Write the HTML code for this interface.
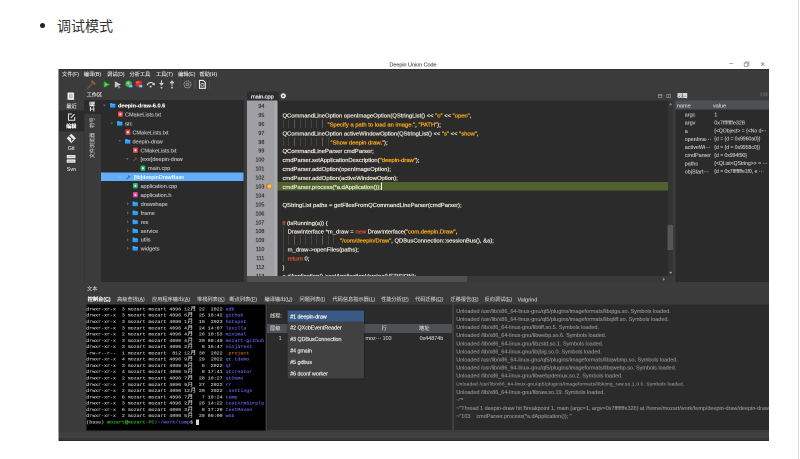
<!DOCTYPE html>
<html lang="zh-CN"><head><meta charset="utf-8"><title>调试模式</title>
<style>
*{box-sizing:border-box;margin:0;padding:0}
html,body{width:800px;height:459px;overflow:hidden;background:#fff}
body{position:relative;font-family:"Liberation Sans","Noto Sans CJK SC",sans-serif;color:#333}
.a{position:absolute;white-space:pre}
.b{font-weight:bold}
.m{font-family:"Liberation Mono","Noto Sans CJK SC",monospace}
svg{position:absolute;overflow:visible}
.or{color:#f2a41c;-webkit-text-stroke:.6px #f2a41c}.kw{color:#e2562a}
.code{-webkit-text-stroke:.44px currentColor}
.ui{-webkit-text-stroke:.24px currentColor}
.term{-webkit-text-stroke:.24px currentColor}
.g{color:#3a3a3a;opacity:.0}
.bl{color:#6666f2}.gr{color:#31c431}.rd{color:#cf6a3a}
.yue{display:inline-block;width:11.86px;font-size:11px;line-height:1;vertical-align:baseline;text-align:right;color:#e6e6e6}.cur{background:#d8d8d8}
#w{position:absolute;left:0;top:0;width:1600px;height:918px;transform:scale(0.5);transform-origin:0 0;will-change:transform;-webkit-text-stroke-width:0.24px;filter:blur(0.6px)}
</style></head><body>
<div class="a" style="left:798px;top:0px;width:1.3px;height:459px;background:#d6d9df;"></div>
<div class="a" style="left:39.8px;top:23px;width:5px;height:5px;border-radius:50%;background:#222"></div>
<div class="a" style="left:57px;top:15.6px;font-size:14px;line-height:20px;color:#333">调试模式</div>
<div id="w">
<div class="a" style="left:116.6px;top:116px;width:1421px;height:22px;background:#ffffff;"></div>
<div class="a" style="left:116.6px;top:137.6px;width:1421px;height:744.4px;background:#3b3b3b;"></div>
<div class="a" style="left:116.6px;top:137.6px;width:1421px;height:1.4px;background:#2a2a2a;"></div>
<div class="a" style="left:116.6px;top:137.6px;width:1.4px;height:744.4px;background:#2c2c2c;"></div>
<div class="a" style="left:116px;top:118px;width:1420px;text-align:center;font-size:10.8px;line-height:22px;color:#4a4a4a">Deepin Union Code</div>
<svg style="left:1450px;top:116px" width="88" height="22" viewBox="0 0 44 11"><g fill="none" stroke="#7a7a7a" stroke-width=".65"><path d="M4.5 5.6h3.6"/><rect x="19.2" y="5" width="3.6" height="3.4"/><path d="M20.4 5V3.9h3.6v3.4h-1.2"/><path d="M36 4.5l3.4 3.4M39.4 4.5l-3.4 3.4"/></g></svg>
<div class="a ui" style="left:124px;top:141.52px;font-size:10.4px;line-height:14.56px;color:#e4e4e4;">文件(F)</div>
<div class="a ui" style="left:167.6px;top:141.52px;font-size:10.4px;line-height:14.56px;color:#e4e4e4;">编译(B)</div>
<div class="a ui" style="left:214px;top:141.52px;font-size:10.4px;line-height:14.56px;color:#e4e4e4;">调试(D)</div>
<div class="a ui" style="left:259px;top:141.52px;font-size:10.4px;line-height:14.56px;color:#e4e4e4;">分析工具</div>
<div class="a ui" style="left:312px;top:141.52px;font-size:10.4px;line-height:14.56px;color:#e4e4e4;">工具(T)</div>
<div class="a ui" style="left:356px;top:141.52px;font-size:10.4px;line-height:14.56px;color:#e4e4e4;">编辑(E)</div>
<div class="a ui" style="left:399px;top:141.52px;font-size:10.4px;line-height:14.56px;color:#e4e4e4;">帮助(H)</div>
<div class="a" style="left:116.6px;top:865px;width:1421px;height:10.6px;background:#404040;"></div>
<div class="a" style="left:116.6px;top:875.6px;width:1421px;height:5px;background:#363636;"></div>
<div class="a" style="left:116.6px;top:880.4px;width:1421px;height:1.6px;background:#2b2b2b;"></div>
<svg style="left:172px;top:159px" width="20" height="20" viewBox="0 0 10 10"><path d="M1.7 8.9L7.2 3" stroke="#7d4f38" stroke-width="1.5" stroke-linecap="round"/><path d="M6 1.7l2.6 2.6" stroke="#8e5f46" stroke-width="2" stroke-linecap="round"/></svg>
<svg style="left:206px;top:160px" width="16" height="18" viewBox="0 0 8 9"><path d="M.8 1.2v6.6L7 4.5z" fill="#27c127"/><path d="M2.2 3.4v2.4L4.6 4.5z" fill="#7be36f"/></svg>
<svg style="left:228px;top:160px" width="16" height="18" viewBox="0 0 8 9"><path d="M.8 1.2v6.6L7 4.5z" fill="#c9c9c9"/><path d="M3.6 4.2l3.2 3.6-1.6.1-.9 1.2z" fill="#8d8d8d"/></svg>
<svg style="left:250px;top:160px" width="16" height="18" viewBox="0 0 8 9"><circle cx="3.6" cy="3.8" r="3.3" fill="#3db54a"/><circle cx="3.2" cy="3.2" r="1.3" fill="#8fe08a"/><rect x="3.8" y="5" width="3.8" height="2.6" rx=".6" fill="#3f8fe0"/><rect x="4.4" y="5.5" width="2.6" height="1" fill="#cfe5fa"/></svg>
<svg style="left:270px;top:160px" width="16" height="18" viewBox="0 0 8 9"><rect x=".6" y=".9" width="6.2" height="5.6" rx="1.2" fill="#e22a2a"/><path d="M1.2 2.2h3" stroke="#ff8a8a" stroke-width=".9"/><rect x="3.8" y="5" width="3.8" height="2.6" rx=".6" fill="#3f8fe0"/><rect x="4.4" y="5.5" width="2.6" height="1" fill="#cfe5fa"/></svg>
<svg style="left:292px;top:160px" width="20" height="18" viewBox="0 0 10 9"><path d="M1.2 5.4A3.6 3.6 0 0 1 8 4.6" fill="none" stroke="#dcdcdc" stroke-width="1.1"/><path d="M8.9 2.6l-.4 3-2.6-1z" fill="#dcdcdc"/><circle cx="4.6" cy="6.6" r=".95" fill="#dcdcdc"/></svg>
<svg style="left:316px;top:159px" width="14" height="20" viewBox="0 0 7 10"><path d="M3.5 .6v5.2" stroke="#d2d2d2" stroke-width=".9"/><path d="M1 3.4h5L3.5 6.4z" fill="#d2d2d2"/><circle cx="3.5" cy="8.2" r=".9" fill="#d2d2d2"/></svg>
<svg style="left:337px;top:159px" width="14" height="20" viewBox="0 0 7 10"><path d="M3.5 2v4.6" stroke="#d2d2d2" stroke-width=".9"/><path d="M1 3.8h5L3.5 .8z" fill="#d2d2d2"/><circle cx="3.5" cy="8.2" r=".9" fill="#d2d2d2"/></svg>
<div class="a" style="left:360.6px;top:160px;width:1.2px;height:18px;background:#4d4d4d;"></div>
<svg style="left:366px;top:160px" width="18" height="18" viewBox="0 0 9 9"><circle cx="4.5" cy="4.4" r="3.5" fill="none" stroke="#b4b4b4" stroke-width=".8" stroke-dasharray="1.6 .5"/><circle cx="4.5" cy="4.4" r="1.3" fill="none" stroke="#a0a0a0" stroke-width=".7"/></svg>
<div class="a" style="left:389.2px;top:160px;width:1.4px;height:18px;background:#5a5a5a;"></div>
<svg style="left:397px;top:159px" width="16" height="20" viewBox="0 0 8 10"><path d="M1 .9h3.8l2 2v5.9H1z" fill="none" stroke="#ececec" stroke-width="1.15"/><circle cx="3.9" cy="5.4" r="1.5" fill="none" stroke="#d0d0d0" stroke-width=".7"/></svg>
<div class="a" style="left:418.6px;top:160px;width:1.4px;height:18px;background:#5a5a5a;"></div>
<div class="a" style="left:117.6px;top:221.2px;width:50.4px;height:41.8px;background:#2a2a2a;"></div>
<svg style="left:135.4px;top:185px" width="13.2" height="14.8" viewBox="0 0 6.6 7.4"><rect x="0" y="0" width="6.6" height="7.4" rx=".8" fill="#ececec"/><rect x="1.7" y="1.9" width="3.2" height="3.6" fill="#9a9a9a"/><rect x="2.3" y="2.5" width="2" height="2.4" fill="#d4d4d4"/></svg>
<div class="a" style="left:132.6px;top:205.92px;font-size:10.4px;line-height:14.56px;color:#e2e2e2;">最近</div>
<svg style="left:134.6px;top:226px" width="16.8" height="16" viewBox="0 0 8.4 8"><path d="M4.4 1H1v6.2h6.2V4" fill="none" stroke="#e4e4e4" stroke-width="1"/><path d="M3.4 4.9L7 1.1" stroke="#e4e4e4" stroke-width="1.1"/></svg>
<div class="a b" style="left:132.2px;top:246.32px;font-size:10.4px;line-height:14.56px;color:#ffffff;">编辑</div>
<svg style="left:132.8px;top:267px" width="20" height="20" viewBox="0 0 10 10"><path d="M4.8 .2L9.4 4.8 4.8 9.6.2 4.8z" fill="#e8e8e8"/><path d="M3.4 3.2L6 5.8M5 4.8V7" stroke="#3b3b3b" stroke-width=".8"/><circle cx="3.4" cy="3.2" r=".7" fill="#3b3b3b"/><circle cx="6.2" cy="6" r=".7" fill="#3b3b3b"/><circle cx="5" cy="7.2" r=".6" fill="#3b3b3b"/></svg>
<div class="a" style="left:135.4px;top:289.44px;font-size:10.8px;line-height:15.12px;color:#dcdcdc;">Git</div>
<svg style="left:133.2px;top:310px" width="18.8" height="16" viewBox="0 0 9.4 8"><rect x=".2" y="0" width="8.8" height="3.2" rx=".5" fill="#ececec"/><rect x=".2" y="4.4" width="8.8" height="3.4" rx=".5" fill="#ececec"/><path d="M1.2 1.6h6.8M1.2 6.1h6.8" stroke="#9a9a9a" stroke-width=".6"/></svg>
<div class="a" style="left:133.6px;top:331.44px;font-size:10.8px;line-height:15.12px;color:#dcdcdc;">Svn</div>
<div class="a ui" style="left:173.2px;top:182.52px;font-size:10.4px;line-height:14.56px;color:#ececec;">工作区</div>
<div class="a" style="left:168px;top:200px;width:1.8px;height:364px;background:#353535;"></div>
<div class="a" style="left:168px;top:200px;width:34px;height:28px;background:#2b2b2b;"></div>
<div class="a b" style="left:184.6px;top:213.2px;font-size:10.2px;line-height:14px;color:#ffffff;transform:translate(-50%,-50%) rotate(-90deg)">工程</div>
<div class="a" style="left:184.6px;top:244.6px;font-size:10.2px;line-height:14px;color:#c0c0c0;transform:translate(-50%,-50%) rotate(-90deg)">符号</div>
<div class="a" style="left:184.6px;top:291.1px;font-size:10.2px;line-height:14px;color:#c0c0c0;transform:translate(-50%,-50%) rotate(-90deg)">文件浏览器</div>
<div class="a" style="left:202px;top:200px;width:286px;height:364px;background:#2b2b2b;"></div>
<div class="a" style="left:202px;top:345px;width:285.2px;height:17.2px;background:#62aefa;"></div>
<svg style="left:206.4px;top:208.9px" width="5.2" height="4" viewBox="0 0 2.6 2"><path d="M0 .1h2.6L1.3 1.9z" fill="#6e6e6e"/></svg>
<svg style="left:219.8px;top:206.3px" width="10.8" height="9.2" viewBox="0 0 5.4 4.6"><path d="M0 .5Q0 0 .5 0h1.6l.7.7h2.1q.5 0 .5.5v2.9q0 .5-.5.5H.5Q0 4.6 0 4.1z" fill="#2a9df4"/><path d="M.3 1.6h4.8" stroke="#6cc3ff" stroke-width=".5"/></svg>
<div class="a b" style="left:236px;top:204.06px;font-size:11.2px;line-height:15.68px;color:#ffffff;">deepin-draw-6.0.6</div>
<svg style="left:236px;top:223.38px" width="9.6" height="10.8" viewBox="0 0 4.8 5.4"><rect width="4.8" height="5.4" rx=".9" fill="#e5484d"/><rect x="1.4" y="1.8" width="2" height="2" rx=".4" fill="#ffe1e1"/></svg>
<div class="a" style="left:250px;top:222.08px;font-size:11px;line-height:15.4px;color:#c6c6c6;">CMakeLists.txt</div>
<svg style="left:221.4px;top:244.66px" width="5.2" height="4" viewBox="0 0 2.6 2"><path d="M0 .1h2.6L1.3 1.9z" fill="#6e6e6e"/></svg>
<svg style="left:233.8px;top:242.06px" width="10.8" height="9.2" viewBox="0 0 5.4 4.6"><path d="M0 .5Q0 0 .5 0h1.6l.7.7h2.1q.5 0 .5.5v2.9q0 .5-.5.5H.5Q0 4.6 0 4.1z" fill="#2a9df4"/><path d="M.3 1.6h4.8" stroke="#6cc3ff" stroke-width=".5"/></svg>
<div class="a" style="left:250px;top:239.96px;font-size:11px;line-height:15.4px;color:#c6c6c6;">src</div>
<svg style="left:251.2px;top:259.14px" width="9.6" height="10.8" viewBox="0 0 4.8 5.4"><rect width="4.8" height="5.4" rx=".9" fill="#e5484d"/><rect x="1.4" y="1.8" width="2" height="2" rx=".4" fill="#ffe1e1"/></svg>
<div class="a" style="left:265px;top:257.84px;font-size:11px;line-height:15.4px;color:#c6c6c6;">CMakeLists.txt</div>
<svg style="left:237.4px;top:280.42px" width="5.2" height="4" viewBox="0 0 2.6 2"><path d="M0 .1h2.6L1.3 1.9z" fill="#6e6e6e"/></svg>
<svg style="left:249.8px;top:277.82px" width="10.8" height="9.2" viewBox="0 0 5.4 4.6"><path d="M0 .5Q0 0 .5 0h1.6l.7.7h2.1q.5 0 .5.5v2.9q0 .5-.5.5H.5Q0 4.6 0 4.1z" fill="#2a9df4"/><path d="M.3 1.6h4.8" stroke="#6cc3ff" stroke-width=".5"/></svg>
<div class="a" style="left:265px;top:275.72px;font-size:11px;line-height:15.4px;color:#c6c6c6;">deepin-draw</div>
<svg style="left:266.4px;top:294.9px" width="9.6" height="10.8" viewBox="0 0 4.8 5.4"><rect width="4.8" height="5.4" rx=".9" fill="#e5484d"/><rect x="1.4" y="1.8" width="2" height="2" rx=".4" fill="#ffe1e1"/></svg>
<div class="a" style="left:281px;top:293.6px;font-size:11px;line-height:15.4px;color:#c6c6c6;">CMakeLists.txt</div>
<svg style="left:252.4px;top:316.18px" width="5.2" height="4" viewBox="0 0 2.6 2"><path d="M0 .1h2.6L1.3 1.9z" fill="#6e6e6e"/></svg>
<svg style="left:265.6px;top:313.78px" width="8.8" height="8.8" viewBox="0 0 4.4 4.4"><path d="M.8 3.8L3 1.4" stroke="#86513a" stroke-width=".9" stroke-linecap="round"/><path d="M2.6 .9l1.1 1.1" stroke="#86513a" stroke-width="1.1" stroke-linecap="round"/></svg>
<div class="a" style="left:281px;top:311.48px;font-size:11px;line-height:15.4px;color:#c6c6c6;">[exe]deepin-draw</div>
<svg style="left:281.2px;top:330.66px" width="9.6" height="10.8" viewBox="0 0 4.8 5.4"><rect width="4.8" height="5.4" rx=".9" fill="#29b473"/><rect x="1.4" y="1.8" width="2" height="2" rx=".4" fill="#d9ffe9"/></svg>
<div class="a" style="left:296px;top:329.36px;font-size:11px;line-height:15.4px;color:#c6c6c6;">main.cpp</div>
<svg style="left:239.2px;top:351.34px" width="4" height="5.2" viewBox="0 0 2 2.6"><path d="M.1 0v2.6L1.9 1.3z" fill="#8cc2f8"/></svg>
<svg style="left:251.6px;top:349.54px" width="8.8" height="8.8" viewBox="0 0 4.4 4.4"><path d="M.8 3.8L3 1.4" stroke="#2f66a6" stroke-width=".9" stroke-linecap="round"/><path d="M2.6 .9l1.1 1.1" stroke="#2f66a6" stroke-width="1.1" stroke-linecap="round"/></svg>
<div class="a" style="left:267.4px;top:347.24px;font-size:11px;line-height:15.4px;color:#ffffff;">[lib]deepinDrawBase</div>
<svg style="left:266px;top:366.42px" width="9.6" height="10.8" viewBox="0 0 4.8 5.4"><rect width="4.8" height="5.4" rx=".9" fill="#29b473"/><rect x="1.4" y="1.8" width="2" height="2" rx=".4" fill="#d9ffe9"/></svg>
<div class="a" style="left:281px;top:365.12px;font-size:11px;line-height:15.4px;color:#c6c6c6;">application.cpp</div>
<svg style="left:266px;top:384.3px" width="9.6" height="10.8" viewBox="0 0 4.8 5.4"><rect width="4.8" height="5.4" rx=".9" fill="#e0409e"/><rect x="1.4" y="1.8" width="2" height="2" rx=".4" fill="#ffd9f0"/></svg>
<div class="a" style="left:281px;top:383px;font-size:11px;line-height:15.4px;color:#c6c6c6;">application.h</div>
<svg style="left:253.8px;top:404.98px" width="4" height="5.2" viewBox="0 0 2 2.6"><path d="M.1 0v2.6L1.9 1.3z" fill="#6e6e6e"/></svg>
<svg style="left:264.6px;top:402.98px" width="10.8" height="9.2" viewBox="0 0 5.4 4.6"><path d="M0 .5Q0 0 .5 0h1.6l.7.7h2.1q.5 0 .5.5v2.9q0 .5-.5.5H.5Q0 4.6 0 4.1z" fill="#2a9df4"/><path d="M.3 1.6h4.8" stroke="#6cc3ff" stroke-width=".5"/></svg>
<div class="a" style="left:281.6px;top:400.88px;font-size:11px;line-height:15.4px;color:#c6c6c6;">drawshape</div>
<svg style="left:253.8px;top:422.86px" width="4" height="5.2" viewBox="0 0 2 2.6"><path d="M.1 0v2.6L1.9 1.3z" fill="#6e6e6e"/></svg>
<svg style="left:264.6px;top:420.86px" width="10.8" height="9.2" viewBox="0 0 5.4 4.6"><path d="M0 .5Q0 0 .5 0h1.6l.7.7h2.1q.5 0 .5.5v2.9q0 .5-.5.5H.5Q0 4.6 0 4.1z" fill="#2a9df4"/><path d="M.3 1.6h4.8" stroke="#6cc3ff" stroke-width=".5"/></svg>
<div class="a" style="left:281.6px;top:418.76px;font-size:11px;line-height:15.4px;color:#c6c6c6;">frame</div>
<svg style="left:253.8px;top:440.74px" width="4" height="5.2" viewBox="0 0 2 2.6"><path d="M.1 0v2.6L1.9 1.3z" fill="#6e6e6e"/></svg>
<svg style="left:264.6px;top:438.74px" width="10.8" height="9.2" viewBox="0 0 5.4 4.6"><path d="M0 .5Q0 0 .5 0h1.6l.7.7h2.1q.5 0 .5.5v2.9q0 .5-.5.5H.5Q0 4.6 0 4.1z" fill="#2a9df4"/><path d="M.3 1.6h4.8" stroke="#6cc3ff" stroke-width=".5"/></svg>
<div class="a" style="left:281.6px;top:436.64px;font-size:11px;line-height:15.4px;color:#c6c6c6;">res</div>
<svg style="left:253.8px;top:458.62px" width="4" height="5.2" viewBox="0 0 2 2.6"><path d="M.1 0v2.6L1.9 1.3z" fill="#6e6e6e"/></svg>
<svg style="left:264.6px;top:456.62px" width="10.8" height="9.2" viewBox="0 0 5.4 4.6"><path d="M0 .5Q0 0 .5 0h1.6l.7.7h2.1q.5 0 .5.5v2.9q0 .5-.5.5H.5Q0 4.6 0 4.1z" fill="#2a9df4"/><path d="M.3 1.6h4.8" stroke="#6cc3ff" stroke-width=".5"/></svg>
<div class="a" style="left:281.6px;top:454.52px;font-size:11px;line-height:15.4px;color:#c6c6c6;">service</div>
<svg style="left:253.8px;top:476.5px" width="4" height="5.2" viewBox="0 0 2 2.6"><path d="M.1 0v2.6L1.9 1.3z" fill="#6e6e6e"/></svg>
<svg style="left:264.6px;top:474.5px" width="10.8" height="9.2" viewBox="0 0 5.4 4.6"><path d="M0 .5Q0 0 .5 0h1.6l.7.7h2.1q.5 0 .5.5v2.9q0 .5-.5.5H.5Q0 4.6 0 4.1z" fill="#2a9df4"/><path d="M.3 1.6h4.8" stroke="#6cc3ff" stroke-width=".5"/></svg>
<div class="a" style="left:281.6px;top:472.4px;font-size:11px;line-height:15.4px;color:#c6c6c6;">utils</div>
<svg style="left:253.8px;top:494.38px" width="4" height="5.2" viewBox="0 0 2 2.6"><path d="M.1 0v2.6L1.9 1.3z" fill="#6e6e6e"/></svg>
<svg style="left:264.6px;top:492.38px" width="10.8" height="9.2" viewBox="0 0 5.4 4.6"><path d="M0 .5Q0 0 .5 0h1.6l.7.7h2.1q.5 0 .5.5v2.9q0 .5-.5.5H.5Q0 4.6 0 4.1z" fill="#2a9df4"/><path d="M.3 1.6h4.8" stroke="#6cc3ff" stroke-width=".5"/></svg>
<div class="a" style="left:281.6px;top:490.28px;font-size:11px;line-height:15.4px;color:#c6c6c6;">widgets</div>
<div class="a" style="left:493.6px;top:183.2px;width:64px;height:18.8px;background:#2d2d2d;"></div>
<div class="a" style="left:502px;top:185.96px;font-size:11.2px;line-height:15.68px;color:#f4f4f4;text-shadow:0 0 .8px #fff">main.cpp</div>
<svg style="left:561.2px;top:186.4px" width="11.2" height="11.2" viewBox="0 0 5.6 5.6"><circle cx="2.8" cy="2.8" r="2.6" fill="#f2f2f2"/><path d="M1.9 1.9l1.8 1.8M3.7 1.9L1.9 3.7" stroke="#444" stroke-width=".7"/></svg>
<div class="a" style="left:493.6px;top:201.2px;width:61.6px;height:350.8px;background:#a0a0a4;"></div>
<div class="a" style="left:549.2px;top:201.2px;width:6px;height:350.8px;background:#a9adae;"></div>
<div class="a" style="left:555.2px;top:201.2px;width:780.8px;height:350.8px;background:#2b2b2b;"></div>
<div class="a" style="left:1336px;top:201.2px;width:10.4px;height:351.2px;background:#343434;"></div>
<div class="a" style="left:1335.2px;top:450px;width:10.8px;height:49.6px;background:#565656;"></div>
<div class="a" style="left:555.2px;top:364px;width:780.8px;height:17.2px;background:#50612e;"></div>
<div class="a" style="left:493.6px;top:552px;width:842.4px;height:12px;background:#393939;"></div>
<div class="a" style="left:493.6px;top:552px;width:440.4px;height:12px;background:#505050;"></div>
<svg style="left:1325px;top:554.6px" width="6" height="6.8" viewBox="0 0 3 3.4"><path d="M.4 .2v3L2.6 1.7z" fill="#9a9a9a"/></svg>
<svg style="left:1338px;top:543px" width="6.8" height="6" viewBox="0 0 3.4 3"><path d="M.2 .4h3L1.7 2.6z" fill="#9a9a9a"/></svg>
<svg style="left:1338px;top:205px" width="6.8" height="6" viewBox="0 0 3.4 3"><path d="M.2 2.6h3L1.7 .4z" fill="#8a8a8a"/></svg>
<div class="a" style="left:493.6px;top:204px;width:35px;text-align:right;font-size:10.6px;line-height:16px;color:#333337;-webkit-text-stroke:.4px #333337">94</div>
<div class="a" style="left:493.6px;top:221.9px;width:35px;text-align:right;font-size:10.6px;line-height:16px;color:#333337;-webkit-text-stroke:.4px #333337">95</div>
<div class="a" style="left:493.6px;top:239.78px;width:35px;text-align:right;font-size:10.6px;line-height:16px;color:#333337;-webkit-text-stroke:.4px #333337">96</div>
<div class="a" style="left:493.6px;top:257.66px;width:35px;text-align:right;font-size:10.6px;line-height:16px;color:#333337;-webkit-text-stroke:.4px #333337">97</div>
<div class="a" style="left:493.6px;top:275.56px;width:35px;text-align:right;font-size:10.6px;line-height:16px;color:#333337;-webkit-text-stroke:.4px #333337">98</div>
<div class="a" style="left:493.6px;top:293.44px;width:35px;text-align:right;font-size:10.6px;line-height:16px;color:#333337;-webkit-text-stroke:.4px #333337">99</div>
<div class="a" style="left:493.6px;top:311.34px;width:35px;text-align:right;font-size:10.6px;line-height:16px;color:#333337;-webkit-text-stroke:.4px #333337">100</div>
<div class="a" style="left:493.6px;top:329.22px;width:35px;text-align:right;font-size:10.6px;line-height:16px;color:#333337;-webkit-text-stroke:.4px #333337">101</div>
<div class="a" style="left:493.6px;top:347.12px;width:35px;text-align:right;font-size:10.6px;line-height:16px;color:#333337;-webkit-text-stroke:.4px #333337">102</div>
<div class="a" style="left:493.6px;top:365px;width:35px;text-align:right;font-size:10.6px;line-height:16px;color:#333337;-webkit-text-stroke:.4px #333337">103</div>
<div class="a" style="left:493.6px;top:382.9px;width:35px;text-align:right;font-size:10.6px;line-height:16px;color:#333337;-webkit-text-stroke:.4px #333337">104</div>
<div class="a" style="left:493.6px;top:400.78px;width:35px;text-align:right;font-size:10.6px;line-height:16px;color:#333337;-webkit-text-stroke:.4px #333337">105</div>
<div class="a" style="left:493.6px;top:418.68px;width:35px;text-align:right;font-size:10.6px;line-height:16px;color:#333337;-webkit-text-stroke:.4px #333337">106</div>
<div class="a" style="left:493.6px;top:436.56px;width:35px;text-align:right;font-size:10.6px;line-height:16px;color:#333337;-webkit-text-stroke:.4px #333337">107</div>
<div class="a" style="left:493.6px;top:454.46px;width:35px;text-align:right;font-size:10.6px;line-height:16px;color:#333337;-webkit-text-stroke:.4px #333337">108</div>
<div class="a" style="left:493.6px;top:472.36px;width:35px;text-align:right;font-size:10.6px;line-height:16px;color:#333337;-webkit-text-stroke:.4px #333337">109</div>
<div class="a" style="left:493.6px;top:490.24px;width:35px;text-align:right;font-size:10.6px;line-height:16px;color:#333337;-webkit-text-stroke:.4px #333337">110</div>
<div class="a" style="left:493.6px;top:508.12px;width:35px;text-align:right;font-size:10.6px;line-height:16px;color:#333337;-webkit-text-stroke:.4px #333337">111</div>
<div class="a" style="left:493.6px;top:526.02px;width:35px;text-align:right;font-size:10.6px;line-height:16px;color:#333337;-webkit-text-stroke:.4px #333337">112</div>
<svg style="left:531.8px;top:367.41px" width="11.2" height="11.2" viewBox="0 0 5.6 5.6"><circle cx="2.8" cy="2.8" r="2.7" fill="#e8562a"/><circle cx="3.3" cy="2.8" r="2.1" fill="#f2d224"/></svg>
<div class="a code" style="left:565px;top:222.9px;font-size:11.7px;line-height:16.38px;color:#ebe7d6;">QCommandLineOption openImageOption(QStringList() &lt;&lt; <span class="or">"o"</span> &lt;&lt; <span class="or">"open"</span>,</div>
<div class="a code" style="left:655px;top:240.78px;font-size:11.7px;line-height:16.38px;color:#ebe7d6;"><span class="or">"Specify a path to load an image."</span>, <span class="or">"PATH"</span>);</div>
<div class="a code" style="left:565px;top:258.68px;font-size:11.7px;line-height:16.38px;color:#ebe7d6;">QCommandLineOption activeWindowOption(QStringList() &lt;&lt; <span class="or">"s"</span> &lt;&lt; <span class="or">"show"</span>,</div>
<div class="a code" style="left:661px;top:276.56px;font-size:11.7px;line-height:16.38px;color:#ebe7d6;"><span class="or">"Show deepin draw."</span>);</div>
<div class="a code" style="left:565px;top:294.46px;font-size:11.7px;line-height:16.38px;color:#ebe7d6;">QCommandLineParser cmdParser;</div>
<div class="a code" style="left:565px;top:312.36px;font-size:11.7px;line-height:16.38px;color:#ebe7d6;">cmdParser.setApplicationDescription(<span class="or">"deepin-draw"</span>);</div>
<div class="a code" style="left:565px;top:330.24px;font-size:11.7px;line-height:16.38px;color:#ebe7d6;">cmdParser.addOption(openImageOption);</div>
<div class="a code" style="left:565px;top:348.14px;font-size:11.7px;line-height:16.38px;color:#ebe7d6;">cmdParser.addOption(activeWindowOption);</div>
<div class="a code" style="left:565px;top:366.02px;font-size:11.7px;line-height:16.38px;color:#ebe7d6;">cmdParser.process(*a.dApplication());</div>
<div class="a code" style="left:565px;top:401.8px;font-size:11.7px;line-height:16.38px;color:#ebe7d6;">QStringList paths = getFilesFromQCommandLineParser(cmdParser);</div>
<div class="a code" style="left:565px;top:437.58px;font-size:11.7px;line-height:16.38px;color:#ebe7d6;"><span class="kw">if</span> (isRunning(a)) {</div>
<div class="a code" style="left:575.2px;top:455.48px;font-size:11.7px;line-height:16.38px;color:#ebe7d6;">DrawInterface *m_draw = <span class="kw">new</span> DrawInterface(<span class="or">"com.deepin.Draw"</span>,</div>
<div class="a code" style="left:680px;top:473.36px;font-size:11.7px;line-height:16.38px;color:#ebe7d6;"><span class="or">"/com/deepin/Draw"</span>, QDBusConnection::sessionBus(), &amp;a);</div>
<div class="a code" style="left:575.2px;top:491.26px;font-size:11.7px;line-height:16.38px;color:#ebe7d6;">m_draw-&gt;openFiles(paths);</div>
<div class="a code" style="left:575.2px;top:509.14px;font-size:11.7px;line-height:16.38px;color:#ebe7d6;"><span class="kw">return</span> 0;</div>
<div class="a code" style="left:565px;top:527.02px;font-size:11.7px;line-height:16.38px;color:#ebe7d6;">}</div>
<div class="a" style="left:555.2px;top:542.51px;width:778px;height:9.49px;overflow:hidden"><div class="a code" style="left:9.8px;top:1.8px;font-size:11.7px;line-height:16px;color:#ebe7d6">a.dApplication()-&gt;setApplicationVersion(VERSION);</div></div>
<div class="a" style="left:493.6px;top:542.51px;width:36px;height:9.49px;overflow:hidden"><div class="a" style="right:1px;top:1.4px;font-size:10.6px;line-height:16px;color:#333337;-webkit-text-stroke:.4px #333337">113</div></div>
<div class="a" style="left:566px;top:238.78px;width:1.2px;height:17.4px;background:#5c5c5c;"></div>
<div class="a" style="left:577.2px;top:238.78px;width:1.2px;height:17.4px;background:#5c5c5c;"></div>
<div class="a" style="left:588.4px;top:238.78px;width:1.2px;height:17.4px;background:#5c5c5c;"></div>
<div class="a" style="left:599.6px;top:238.78px;width:1.2px;height:17.4px;background:#5c5c5c;"></div>
<div class="a" style="left:610.8px;top:238.78px;width:1.2px;height:17.4px;background:#5c5c5c;"></div>
<div class="a" style="left:622px;top:238.78px;width:1.2px;height:17.4px;background:#5c5c5c;"></div>
<div class="a" style="left:633.2px;top:238.78px;width:1.2px;height:17.4px;background:#5c5c5c;"></div>
<div class="a" style="left:644.4px;top:238.78px;width:1.2px;height:17.4px;background:#5c5c5c;"></div>
<div class="a" style="left:566px;top:274.56px;width:1.2px;height:17.4px;background:#5c5c5c;"></div>
<div class="a" style="left:577.2px;top:274.56px;width:1.2px;height:17.4px;background:#5c5c5c;"></div>
<div class="a" style="left:588.4px;top:274.56px;width:1.2px;height:17.4px;background:#5c5c5c;"></div>
<div class="a" style="left:599.6px;top:274.56px;width:1.2px;height:17.4px;background:#5c5c5c;"></div>
<div class="a" style="left:610.8px;top:274.56px;width:1.2px;height:17.4px;background:#5c5c5c;"></div>
<div class="a" style="left:622px;top:274.56px;width:1.2px;height:17.4px;background:#5c5c5c;"></div>
<div class="a" style="left:633.2px;top:274.56px;width:1.2px;height:17.4px;background:#5c5c5c;"></div>
<div class="a" style="left:644.4px;top:274.56px;width:1.2px;height:17.4px;background:#5c5c5c;"></div>
<div class="a" style="left:655.6px;top:274.56px;width:1.2px;height:17.4px;background:#5c5c5c;"></div>
<div class="a" style="left:566px;top:453.46px;width:1.2px;height:17.4px;background:#5c5c5c;"></div>
<div class="a" style="left:566px;top:471.36px;width:1.2px;height:17.4px;background:#5c5c5c;"></div>
<div class="a" style="left:577.2px;top:471.36px;width:1.2px;height:17.4px;background:#5c5c5c;"></div>
<div class="a" style="left:588.4px;top:471.36px;width:1.2px;height:17.4px;background:#5c5c5c;"></div>
<div class="a" style="left:599.6px;top:471.36px;width:1.2px;height:17.4px;background:#5c5c5c;"></div>
<div class="a" style="left:610.8px;top:471.36px;width:1.2px;height:17.4px;background:#5c5c5c;"></div>
<div class="a" style="left:622px;top:471.36px;width:1.2px;height:17.4px;background:#5c5c5c;"></div>
<div class="a" style="left:633.2px;top:471.36px;width:1.2px;height:17.4px;background:#5c5c5c;"></div>
<div class="a" style="left:644.4px;top:471.36px;width:1.2px;height:17.4px;background:#5c5c5c;"></div>
<div class="a" style="left:655.6px;top:471.36px;width:1.2px;height:17.4px;background:#5c5c5c;"></div>
<div class="a" style="left:666.8px;top:471.36px;width:1.2px;height:17.4px;background:#5c5c5c;"></div>
<div class="a" style="left:566px;top:489.24px;width:1.2px;height:17.4px;background:#5c5c5c;"></div>
<div class="a" style="left:566px;top:507.12px;width:1.2px;height:17.4px;background:#5c5c5c;"></div>
<div class="a" style="left:762.4px;top:365.01px;width:1.8px;height:15.2px;background:#ffffff;"></div>
<div class="a" style="left:1351.2px;top:201.2px;width:186.4px;height:362.4px;background:#2b2b2b;"></div>
<div class="a" style="left:1351.2px;top:200.8px;width:186.4px;height:18.6px;background:#4d5155;"></div>
<svg style="left:1316.4px;top:188.4px" width="8.8" height="8.4" viewBox="0 0 4.4 4.2"><rect x=".3" y=".3" width="3.6" height="3.4" fill="none" stroke="#9a9a9a" stroke-width=".6"/><path d="M.3 1.4h3.6" stroke="#9a9a9a" stroke-width=".6"/></svg>
<svg style="left:1333.2px;top:188.4px" width="8.8" height="8.4" viewBox="0 0 4.4 4.2"><rect x=".3" y=".3" width="3.6" height="3.4" fill="none" stroke="#9a9a9a" stroke-width=".6"/><path d="M2.1 .3v3.4" stroke="#9a9a9a" stroke-width=".6"/></svg>
<div class="a b" style="left:1354px;top:184.92px;font-size:10.4px;line-height:14.56px;color:#f0f0f0;">视图</div>
<svg style="left:1520.8px;top:184.4px" width="16" height="9.2" viewBox="0 0 8 4.6"><path d="M.6 .2v4.2M2.5 .2v4.2M4.4 .2v4.2M6.3 .2v4.2" stroke="#666" stroke-width="1.1"/></svg>
<div class="a" style="left:1354px;top:203.7px;font-size:11px;line-height:15.4px;color:#cfcfcf;">name</div>
<div class="a" style="left:1426px;top:203.7px;font-size:11px;line-height:15.4px;color:#cfcfcf;">value</div>
<div class="a" style="left:1369.6px;top:222.04px;font-size:10.8px;line-height:15.12px;color:#cacaca;">argc</div>
<div class="a" style="left:1428.6px;top:222.04px;font-size:10.8px;line-height:15.12px;color:#cacaca;">1</div>
<div class="a" style="left:1369.6px;top:238.3px;font-size:10.8px;line-height:15.12px;color:#cacaca;">argv</div>
<div class="a" style="left:1428.6px;top:238.3px;font-size:10.8px;line-height:15.12px;color:#cacaca;">0x7fffffffe328</div>
<div class="a" style="left:1369.6px;top:254.56px;font-size:10.8px;line-height:15.12px;color:#cacaca;">a</div>
<div class="a" style="left:1428.6px;top:255.06px;font-size:10.1px;line-height:14.14px;color:#cacaca;">{&lt;QObject&gt; = {&lt;No d···</div>
<div class="a" style="left:1369.6px;top:270.82px;font-size:10.8px;line-height:15.12px;color:#cacaca;">openIma···</div>
<div class="a" style="left:1428.6px;top:271.32px;font-size:10.1px;line-height:14.14px;color:#cacaca;">{d = {d = 0x9960a0}}</div>
<div class="a" style="left:1369.6px;top:287.08px;font-size:10.8px;line-height:15.12px;color:#cacaca;">activeWi···</div>
<div class="a" style="left:1428.6px;top:287.56px;font-size:10.1px;line-height:14.14px;color:#cacaca;">{d = {d = 0x9958c0}}</div>
<div class="a" style="left:1369.6px;top:303.34px;font-size:10.8px;line-height:15.12px;color:#cacaca;">cmdParser</div>
<div class="a" style="left:1428.6px;top:303.82px;font-size:10.1px;line-height:14.14px;color:#cacaca;">{d = 0x994f90}</div>
<div class="a" style="left:1369.6px;top:319.6px;font-size:10.8px;line-height:15.12px;color:#cacaca;">paths</div>
<div class="a" style="left:1428.6px;top:320.08px;font-size:10.1px;line-height:14.14px;color:#cacaca;">{&lt;QList&lt;QString&gt;&gt; = ···</div>
<div class="a" style="left:1369.6px;top:335.86px;font-size:10.8px;line-height:15.12px;color:#cacaca;">objStart···</div>
<div class="a" style="left:1428.6px;top:336.36px;font-size:10.1px;line-height:14.14px;color:#cacaca;">{d = 0x7fffffffe1f0, e ···</div>
<div class="a" style="left:174px;top:570.92px;font-size:10.4px;line-height:14.56px;color:#cfcfcf;">文本</div>
<div class="a b" style="left:175.6px;top:591.72px;font-size:10.4px;line-height:14.56px;color:#ffffff;">控制台(<u>C</u>)</div>
<div class="a ui" style="left:234px;top:591.72px;font-size:10.4px;line-height:14.56px;color:#c8c8c8;">高级查找(<u>A</u>)</div>
<div class="a ui" style="left:304px;top:591.72px;font-size:10.4px;line-height:14.56px;color:#c8c8c8;">应用程序输出(<u>A</u>)</div>
<div class="a ui" style="left:394px;top:591.72px;font-size:10.4px;line-height:14.56px;color:#c8c8c8;">堆栈列表(<u>K</u>)</div>
<div class="a ui" style="left:458.8px;top:591.72px;font-size:10.4px;line-height:14.56px;color:#c8c8c8;">断点列表(<u>P</u>)</div>
<div class="a ui" style="left:529px;top:591.72px;font-size:10.4px;line-height:14.56px;color:#c8c8c8;">编译输出(<u>U</u>)</div>
<div class="a ui" style="left:599px;top:591.72px;font-size:10.4px;line-height:14.56px;color:#c8c8c8;">问题列表(<u>I</u>)</div>
<div class="a ui" style="left:665px;top:591.72px;font-size:10.4px;line-height:14.56px;color:#c8c8c8;">代码信息指示器(<u>L</u>)</div>
<div class="a ui" style="left:762px;top:591.72px;font-size:10.4px;line-height:14.56px;color:#c8c8c8;">性能分析(<u>P</u>)</div>
<div class="a ui" style="left:830px;top:591.72px;font-size:10.4px;line-height:14.56px;color:#c8c8c8;">代码迁移(<u>O</u>)</div>
<div class="a ui" style="left:901px;top:591.72px;font-size:10.4px;line-height:14.56px;color:#c8c8c8;">迁移报告(<u>R</u>)</div>
<div class="a ui" style="left:969px;top:591.72px;font-size:10.4px;line-height:14.56px;color:#c8c8c8;">反向调试(<u>E</u>)</div>
<div class="a ui" style="left:1035px;top:592.1px;font-size:11px;line-height:15.4px;color:#c8c8c8;">Valgrind</div>
<div class="a" style="left:173px;top:609.4px;width:358px;height:251.6px;background:#000;"></div>
<div class="a m term" style="left:172.6px;top:612.82px;font-size:9.88px;line-height:12.56px;color:#c6c6c6">drwxr-xr-x  3 mozart mozart 4096 12<span class="yue">月</span> 22  2022 <span class="bl">edb</span>
drwxr-xr-x  3 mozart mozart 4096 6<span class="yue">月</span>  25 16:42 <span class="bl">github</span>
drwxr-xr-x  3 mozart mozart 4096 1<span class="yue">月</span>  16  2023 <span class="bl">hotspot</span>
drwxr-xr-x  3 mozart mozart 4096 4<span class="yue">月</span>  24 14:07 <span class="bl">lexilla</span>
drwxr-xr-x  2 mozart mozart 4096 4<span class="yue">月</span>  26 10:53 <span class="bl">minimal</span>
drwxr-xr-x  3 mozart mozart 4096 4<span class="yue">月</span>  20 09:49 <span class="bl">mozart-github</span>
drwxr-xr-x  3 mozart mozart 4096 2<span class="yue">月</span>   6 15:47 <span class="bl">ninjaTest</span>
-rw-r--r--  1 mozart mozart  812 12<span class="yue">月</span> 30  2022 <span class="rd">.project</span>
drwxr-xr-x  4 mozart mozart 4096 9<span class="yue">月</span>  29  2022 <span class="bl">qt.tdemo</span>
drwxr-xr-x  3 mozart mozart 4096 5<span class="yue">月</span>   5  2022 <span class="bl">qt</span>
drwxr-xr-x  4 mozart mozart 4096 5<span class="yue">月</span>   8 17:41 <span class="bl">qtcreator</span>
drwxr-xr-x  2 mozart mozart 4096 7<span class="yue">月</span>  28 10:27 <span class="bl">qtDemo</span>
drwxr-xr-x  7 mozart mozart 4096 9<span class="yue">月</span>  27  2022 <span class="bl">rr</span>
drwxr-xr-x  2 mozart mozart 4096 12<span class="yue">月</span> 20  2022 <span class="bl">.settings</span>
drwxr-xr-x  8 mozart mozart 4096 7<span class="yue">月</span>   7 10:24 <span class="bl">temp</span>
drwxr-xr-x  3 mozart mozart 4096 2<span class="yue">月</span>  28 14:22 <span class="bl">testArmSimple</span>
drwxr-xr-x  6 mozart mozart 4096 3<span class="yue">月</span>   8 17:20 <span class="bl">testMaven</span>
drwxr-xr-x  2 mozart mozart 4096 5<span class="yue">月</span>  29 09:00 <span class="bl">wsb</span>
(base) <span class="gr">mozart@mozart-PC</span>:<span class="bl">~/work/temp</span>$ <span class="cur"> </span></div>
<div class="a" style="left:533.6px;top:609.4px;width:370.8px;height:251px;background:#2b2b2b;"></div>
<div class="a" style="left:904.4px;top:609.4px;width:3.2px;height:251px;background:#3f3f3f;"></div>
<div class="a" style="left:540px;top:624.52px;font-size:10.4px;line-height:14.56px;color:#d0d0d0;">线程:</div>
<div class="a" style="left:533.6px;top:647.6px;width:370.8px;height:18.4px;background:#4d5155;"></div>
<div class="a" style="left:540px;top:649.92px;font-size:10.4px;line-height:14.56px;color:#d8d8d8;">层级</div>
<div class="a" style="left:763px;top:649.92px;font-size:10.4px;line-height:14.56px;color:#d8d8d8;">行</div>
<div class="a" style="left:838px;top:649.92px;font-size:10.4px;line-height:14.56px;color:#d8d8d8;">地址</div>
<div class="a" style="left:557.2px;top:668.64px;font-size:10.8px;line-height:15.12px;color:#c8c8c8;">1</div>
<div class="a" style="left:731px;top:668.64px;font-size:10.8px;line-height:15.12px;color:#c8c8c8;">moz···</div>
<div class="a" style="left:765.2px;top:668.64px;font-size:10.8px;line-height:15.12px;color:#c8c8c8;">103</div>
<div class="a" style="left:839.2px;top:668.64px;font-size:10.8px;line-height:15.12px;color:#c8c8c8;">0x44874b</div>
<div class="a" style="left:574.8px;top:620.6px;width:153.2px;height:136px;background:#414141;box-shadow:0 0 2.4px rgba(0,0,0,.7)"></div>
<div class="a" style="left:574.8px;top:620.6px;width:153.2px;height:22px;background:#395a86;"></div>
<div class="a" style="left:580.4px;top:625.58px;font-size:10.6px;line-height:14.84px;color:#ffffff;-webkit-text-stroke:.4px currentColor">#1 deepin-draw</div>
<div class="a" style="left:580.4px;top:648.38px;font-size:10.6px;line-height:14.84px;color:#e6e6e6;-webkit-text-stroke:.4px currentColor">#2 QXcbEventReader</div>
<div class="a" style="left:580.4px;top:671.18px;font-size:10.6px;line-height:14.84px;color:#e6e6e6;-webkit-text-stroke:.4px currentColor">#3 QDBusConnection</div>
<div class="a" style="left:580.4px;top:693.98px;font-size:10.6px;line-height:14.84px;color:#e6e6e6;-webkit-text-stroke:.4px currentColor">#4 gmain</div>
<div class="a" style="left:580.4px;top:716.78px;font-size:10.6px;line-height:14.84px;color:#e6e6e6;-webkit-text-stroke:.4px currentColor">#5 gdbus</div>
<div class="a" style="left:580.4px;top:739.58px;font-size:10.6px;line-height:14.84px;color:#e6e6e6;-webkit-text-stroke:.4px currentColor">#6 dconf worker</div>
<div class="a" style="left:907.6px;top:609.4px;width:630px;height:251px;background:#2b2b2b;"></div>
<div class="a" style="left:907.6px;top:609.4px;width:630px;height:251px;overflow:hidden">
<div class="a" style="left:4.8px;top:5.58px;font-size:10.9px;line-height:15.26px;color:#949494;">Unloaded /usr/lib/x86_64-linux-gnu/qt5/plugins/imageformats/libqtga.so. Symbols loaded.</div>
<div class="a" style="left:4.8px;top:21.72px;font-size:10.9px;line-height:15.26px;color:#949494;">Unloaded /usr/lib/x86_64-linux-gnu/qt5/plugins/imageformats/libqtiff.so. Symbols loaded.</div>
<div class="a" style="left:4.8px;top:37.9px;font-size:10.9px;line-height:15.26px;color:#949494;">Unloaded /lib/x86_64-linux-gnu/libtiff.so.5. Symbols loaded.</div>
<div class="a" style="left:4.8px;top:54.06px;font-size:10.9px;line-height:15.26px;color:#949494;">Unloaded /lib/x86_64-linux-gnu/libwebp.so.6. Symbols loaded.</div>
<div class="a" style="left:4.8px;top:70.22px;font-size:10.9px;line-height:15.26px;color:#949494;">Unloaded /lib/x86_64-linux-gnu/libzstd.so.1. Symbols loaded.</div>
<div class="a" style="left:4.8px;top:86.36px;font-size:10.9px;line-height:15.26px;color:#949494;">Unloaded /lib/x86_64-linux-gnu/libjbig.so.0. Symbols loaded.</div>
<div class="a" style="left:4.8px;top:102.54px;font-size:10.9px;line-height:15.26px;color:#949494;">Unloaded /usr/lib/x86_64-linux-gnu/qt5/plugins/imageformats/libqwbmp.so. Symbols loaded.</div>
<div class="a" style="left:4.8px;top:118.7px;font-size:10.9px;line-height:15.26px;color:#949494;">Unloaded /usr/lib/x86_64-linux-gnu/qt5/plugins/imageformats/libqwebp.so. Symbols loaded.</div>
<div class="a" style="left:4.8px;top:134.84px;font-size:10.9px;line-height:15.26px;color:#949494;">Unloaded /lib/x86_64-linux-gnu/libwebpdemux.so.2. Symbols loaded.</div>
<div class="a" style="left:4.8px;top:152.2px;font-size:9.2px;line-height:12.88px;color:#949494;letter-spacing:.52px">Unloaded /usr/lib/x86_64-linux-gnu/qt5/plugins/imageformats/libkimg_raw.so.1.0.0. Symbols loaded.</div>
<div class="a" style="left:4.8px;top:167.18px;font-size:10.9px;line-height:15.26px;color:#949494;">Unloaded /lib/x86_64-linux-gnu/libraw.so.19. Symbols loaded.</div>
<div class="a" style="left:4.8px;top:183.34px;font-size:10.9px;line-height:15.26px;color:#949494;">~"*</div>
<div class="a" style="left:4.8px;top:199.5px;font-size:10.9px;line-height:15.26px;color:#949494;">~"Thread 1 deepin-draw hit Breakpoint 1, main (argc=1, argv=0x7fffffffe328) at /home/mozart/work/temp/deepin-draw/deepin-draw/main.cpp:103</div>
<div class="a" style="left:4.8px;top:215.66px;font-size:10.9px;line-height:15.26px;color:#949494;">~"103    cmdParser.process(*a.dApplication()); "</div>
</div>
</div>
</body></html>
